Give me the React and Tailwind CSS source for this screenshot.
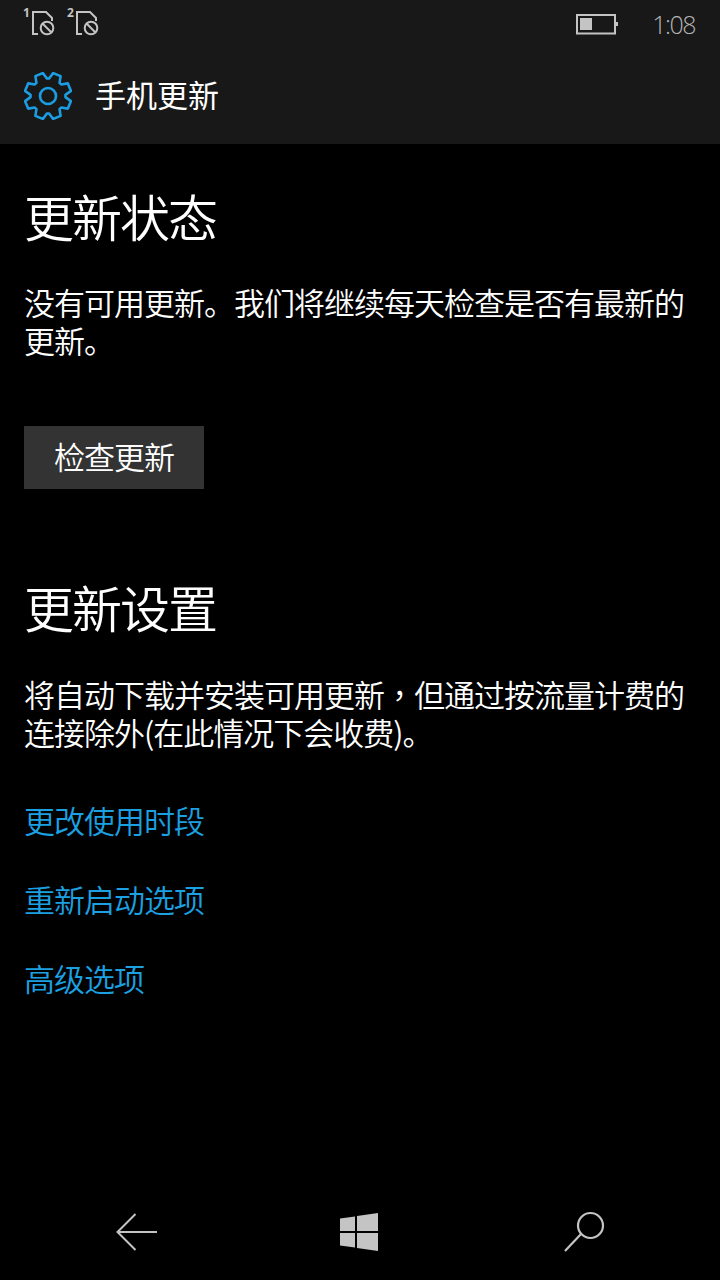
const FONT = "font-['Noto_Sans_CJK_SC','Noto_Sans',sans-serif]";
const BODY = "text-[31px] tracking-[-1px] leading-[38px] font-[350]";
const HEAD = "text-[50px] tracking-[-2px] leading-[64px] font-[350]";

// 8-tooth gear outline, notches sit on the axes
function gearPath(cx, cy, outer, inner) {
  const pts = [];
  for (let i = 0; i < 8; i++) {
    const step = Math.PI / 4;
    const a = (i + 0.5) * step;
    [
      [inner, a - step * 0.42],
      [outer, a - step * 0.22],
      [outer, a + step * 0.22],
      [inner, a + step * 0.42],
    ].forEach(([r, t]) => {
      pts.push(`${(cx + r * Math.cos(t)).toFixed(2)} ${(cy + r * Math.sin(t)).toFixed(2)}`);
    });
  }
  return `M${pts.join("L")}Z`;
}

function SimIcon({ num }) {
  return (
    <div className="flex items-start">
      <span className="w-[9px] text-[12px] leading-none font-bold text-[#c4c4c4] font-['Open_Sans',sans-serif] mt-[7px]">
        {num}
      </span>
      <svg width="24" height="28" viewBox="0 0 24 28" className="mt-[11px] text-[#c4c4c4]" fill="none" stroke="currentColor" strokeWidth="2">
        <path d="M6 23H1V1H14L20 7V10" />
        <circle cx="15" cy="17" r="6.3" />
        <path d="M10.5 12.5L19.5 21.5" />
      </svg>
    </div>
  );
}

function StatusBar() {
  return (
    <div className="flex items-start justify-between h-[48px] pl-[23px] pr-[25px]">
      <div className="flex gap-[11px]">
        <SimIcon num="1" />
        <SimIcon num="2" />
      </div>
      <div className="flex items-center h-[48px]">
        <svg width="42" height="21" viewBox="0 0 42 21" className="text-[#c4c4c4]" fill="none">
          <rect x="1" y="1" width="38" height="18.5" stroke="currentColor" strokeWidth="2" />
          <rect x="4" y="4" width="12" height="12" fill="currentColor" />
          <rect x="39" y="8" width="3" height="4" fill="currentColor" />
        </svg>
        <span className="ml-[34px] text-[25px] tracking-[-1.5px] font-light leading-none text-[#b4b4b4] font-['Open_Sans',sans-serif]">1:08</span>
      </div>
    </div>
  );
}

function Link({ children }) {
  return <div className={`h-[79px] flex items-center text-[#1ba1e2] ${BODY}`}>{children}</div>;
}

export default function App() {
  return (
    <div className={`${FONT} w-[720px] h-[1280px] bg-black text-white flex flex-col`}>
      <div className="bg-[#181818] h-[144px] flex-none">
        <StatusBar />
        <div className="flex items-center gap-[23px] pl-[24px] h-[96px]">
          <svg width="48" height="48" viewBox="0 0 48 48" fill="none" stroke="#1b9de2" strokeWidth="2.6" strokeLinejoin="round">
            <path d={gearPath(24, 24, 23.5, 17.5)} />
            <circle cx="24" cy="24" r="8" />
          </svg>
          <span className="text-[31px] leading-[38px] -mt-[4px]">手机更新</span>
        </div>
      </div>

      <div className="flex-1 px-[24px]">
        <h1 className={`mt-[39px] ${HEAD}`}>更新状态</h1>
        <p className={`mt-[36px] w-[672px] ${BODY}`}>没有可用更新。我们将继续每天检查是否有最新的更新。</p>
        <button className={`mt-[67px] w-[180px] h-[63px] pb-[4px] bg-[#333333] text-white ${BODY}`}>检查更新</button>
        <h2 className={`mt-[85px] ${HEAD}`}>更新设置</h2>
        <div className={`mt-[37px] w-[672px] ${BODY}`}>
          <p>
            将自动下载并安装可用更新<span className="font-['Noto_Sans_CJK_TC',sans-serif]">，</span>但通过按流量计费的
          </p>
          <p>连接除外(在此情况下会收费)。</p>
        </div>
        <div className="mt-[29px]">
          <Link>更改使用时段</Link>
          <Link>重新启动选项</Link>
          <Link>高级选项</Link>
        </div>
      </div>

      <div className="h-[96px] flex-none flex items-center justify-between pl-[116px] pr-[114px] pb-[1px] text-[#c4c4c4]">
        <svg width="42" height="38" viewBox="0 0 42 38" fill="none" stroke="currentColor" strokeWidth="2">
          <path d="M19.5 1L1.5 19L19.5 37M1.5 19H41" />
        </svg>
        <svg width="38" height="38" viewBox="0 0 38 38" fill="currentColor" className="-ml-[4px]">
          <path d="M0 5.5L15 3.4V18H0ZM17 3L38 0V18H17ZM0 20H15V34.6L0 32.5ZM17 20H38V38L17 35Z" />
        </svg>
        <svg width="42" height="42" viewBox="0 0 42 42" fill="none" stroke="currentColor" strokeWidth="2.2">
          <circle cx="26.5" cy="14.5" r="12.5" />
          <path d="M17 23L1 40" />
        </svg>
      </div>
    </div>
  );
}
